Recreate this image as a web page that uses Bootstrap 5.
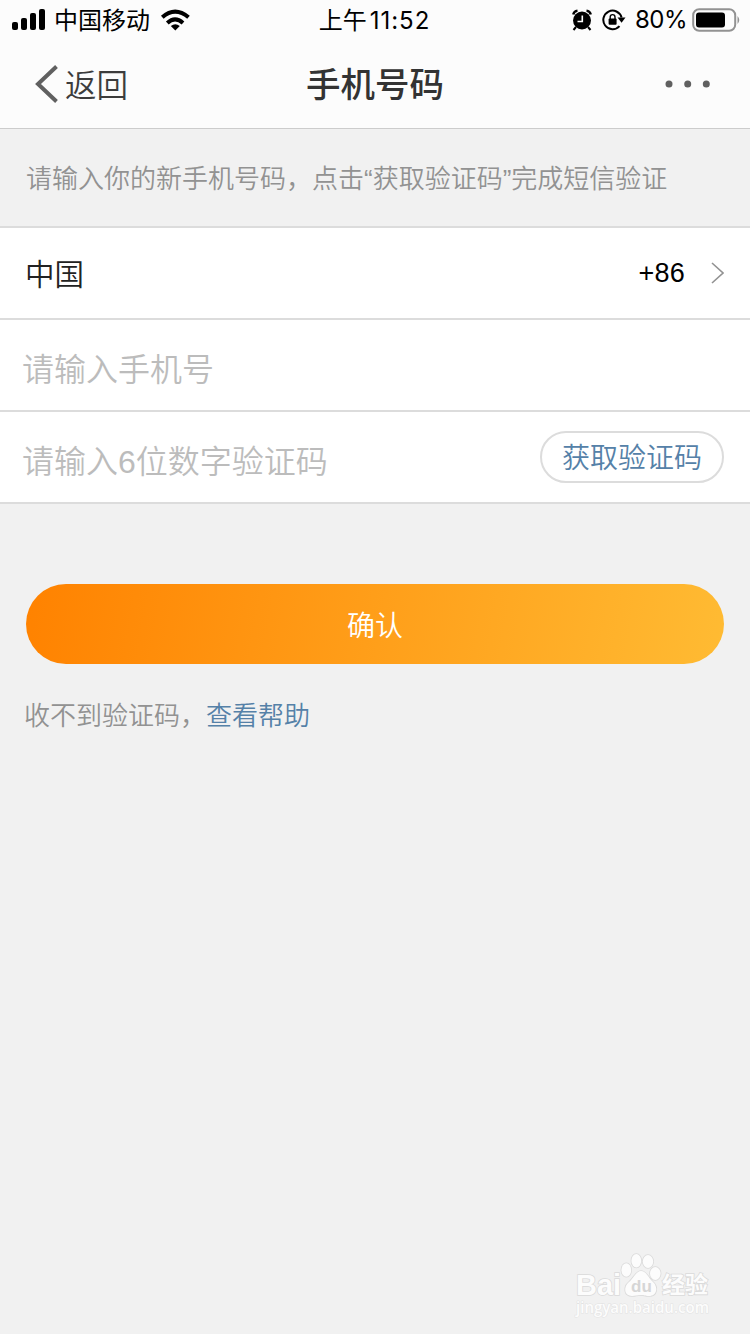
<!DOCTYPE html>
<html lang="zh-CN">
<head>
<meta charset="utf-8">
<meta name="viewport" content="width=device-width, initial-scale=1">
<title>手机号码</title>
<link href="https://cdn.jsdelivr.net/npm/bootstrap@5.3.0/dist/css/bootstrap.min.css" rel="stylesheet">
<style>
  body { background: #f1f1f1; color: #333; font-family: "Liberation Sans", "Noto Sans CJK SC", sans-serif; font-weight: 350; }
  svg { display: block; flex: none; }
  .screen { min-height: 1334px; }
  .top-area { background: #fcfcfc; height: 129px; border-bottom: 1px solid #ccc; }
  .status-bar { height: 40px; padding: 0 10px 0 12px; color: #000; font: 400 24px/40px Inter, "Noto Sans CJK SC", sans-serif; }
  .carrier { padding-top: 1px; }
  .clock { padding: 1px 3px 0 0; }
  .clock b { font-weight: 400; letter-spacing: 1px; margin-left: 3px; }
  .rotate-lock { margin-left: 10px; }
  .battery-pct { font-size: 24px; letter-spacing: -.5px; margin-left: 9px; }
  .battery { margin-left: 5px; }
  .title-bar { height: 88px; padding: 0 39px 0 35px; }
  .back-link { color: #3c3c3c; font-size: 31.5px; line-height: 46px; font-weight: 350; gap: 7px; }
  .back-link span { padding-top: 5px; }
  .page-title { font-size: 34.5px; line-height: 48px; font-weight: 500; color: #333; padding: 1px 0 0 4px; }
  .side { flex: 1 1 0; }
  .hint { height: 97px; padding: 3px 26px 0; font-size: 26px; color: #929292; white-space: nowrap; }
  .rows { border-top: 2px solid #dcdcdc; }
  .rows .list-group-item, .rows .list-group-item:last-child { height: 92px; padding: 0 26px; border: 0; border-bottom: 2px solid #dcdcdc; background: #fff; color: #222; }
  .country { font-size: 29.5px; padding-top: 4px; margin-left: -1px; }
  .dial { font-size: 27px; color: #000; font-weight: 400; letter-spacing: .2px; }
  .chev { margin-left: 26px; }
  .rows .form-control { padding: 11px 0 0; border: 0; height: 60px; font-size: 32px; font-weight: 350; margin-left: -4px; background: none; }
  .rows .form-control::placeholder { color: #bcbcbc; opacity: 1; }
  .code-btn { width: 184px; height: 52px; border: 2px solid #dcdcdc; color: #5581a8; font-size: 28px; line-height: 48px; font-weight: 350; padding: 2px 0 0; margin-bottom: 1px; }
  .confirm { height: 80px; margin: 80px 26px 0; border: 0; color: #fff; font-size: 28px; font-weight: 350; padding: 11px 0 6px; background: linear-gradient(100deg, #ff8200, #ffbb33); }
  .help { padding: 33px 24px 0; font-size: 26px; line-height: 38px; color: #929292; }
  .help a { color: #5581a8; }
  .watermark { padding: 0 38px 15px 0; }
</style>
</head>
<body>
<div class="screen d-flex flex-column">
  <header class="top-area">
    <div class="status-bar d-flex align-items-center">
      <div class="side d-flex align-items-center">
        <svg width="34" height="22" viewBox="0 0 34 22"><rect x="0" y="13" width="6" height="8" rx="2"/><rect x="9" y="9" width="6" height="12" rx="2"/><rect x="18" y="4" width="6" height="17" rx="2"/><rect x="27" y="0" width="6" height="21" rx="2"/></svg>
        <span class="carrier ms-2">中国移动</span>
        <svg class="ms-2" width="34" height="24" viewBox="0 0 34 24" fill="none" stroke="#000" stroke-width="4"><path d="M4.300 9.200Q17-2 30.500 9.200"/><path d="M9.300 15Q17 7.800 25 15"/><path d="M12.800 18Q17.300 14.500 21.800 18L17.300 22.500Z" fill="#000" stroke="none"/></svg>
      </div>
      <span class="clock">上午<b>11:52</b></span>
      <div class="side d-flex align-items-center justify-content-end">
        <svg width="20" height="22" viewBox="0 0 20 22"><circle cx="10" cy="11.500" r="9"/><path d="M1.200 5.500Q2 2 5.500 1.600M18.800 5.500Q18 2 14.500 1.600" fill="none" stroke="#000" stroke-width="2.400"/><path d="M4 18L1.500 21M16 18L18.500 21" stroke="#000" stroke-width="2"/><path d="M10.300 6.500V12.500H5.500" fill="none" stroke="#fff" stroke-width="1.600"/></svg>
        <svg class="rotate-lock" width="24" height="22" viewBox="0 0 24 22"><path d="M17.500 17.200A9.300 9.300 0 1 1 19.600 8.500" fill="none" stroke="#000" stroke-width="2"/><path d="M15.500 8.500H23.500L19.600 13.800Z"/><rect x="6.600" y="9.500" width="8" height="6.200" rx="1"/><path d="M8.200 10V8A2.400 2.400 0 0 1 13 8V10" fill="none" stroke="#000" stroke-width="1.400"/></svg>
        <span class="battery-pct">80%</span>
        <svg class="battery" width="48" height="24" viewBox="0 0 48 24"><rect x="1.200" y="1.200" width="42" height="21.500" rx="6" fill="none" stroke="#929292" stroke-width="2"/><rect x="4" y="4.500" width="29" height="15" rx="3"/><path d="M45.500 8Q49 12 45.500 16Z" fill="#929292"/></svg>
      </div>
    </div>
    <nav class="title-bar d-flex align-items-center">
      <div class="side">
        <a href="#" class="back-link d-inline-flex align-items-center text-decoration-none">
          <svg width="23" height="38" viewBox="0 0 23 38" fill="none" stroke="#606060" stroke-width="4"><path d="M21.500 1.500L3 19L21.500 36.500"/></svg>
          <span>返回</span>
        </a>
      </div>
      <h1 class="page-title m-0">手机号码</h1>
      <div class="side d-flex justify-content-end">
        <svg width="46" height="8" viewBox="0 0 46 8" fill="#606060"><circle cx="4" cy="4" r="3.500"/><circle cx="22.700" cy="4" r="3.500"/><circle cx="41.300" cy="4" r="3.500"/></svg>
      </div>
    </nav>
  </header>
  <main class="flex-grow-1">
    <div class="hint d-flex align-items-center"><span>请输入你的新手机号码，点击“获取验证码”完成短信验证</span></div>
    <div class="rows list-group list-group-flush">
      <div class="list-group-item d-flex align-items-center">
        <span class="country me-auto">中国</span>
        <span class="dial">+86</span>
        <svg class="chev" width="13" height="22" viewBox="0 0 13 22" fill="none" stroke="#929292" stroke-width="1.600"><path d="M1 1L12 11L1 21"/></svg>
      </div>
      <div class="list-group-item d-flex align-items-center">
        <input class="form-control shadow-none" type="tel" placeholder="请输入手机号">
      </div>
      <div class="list-group-item d-flex align-items-center">
        <input class="form-control shadow-none" type="text" placeholder="请输入6位数字验证码">
        <button type="button" class="code-btn btn rounded-pill flex-shrink-0">获取验证码</button>
      </div>
    </div>
    <div class="d-grid"><button type="button" class="confirm btn rounded-pill">确认</button></div>
    <div class="help">收不到验证码，<a href="#" class="text-decoration-none">查看帮助</a></div>
  </main>
  <footer class="watermark d-flex justify-content-end">
    <svg width="138" height="66" viewBox="0 0 138 66" fill="#fcfcfc" stroke="#dadada" stroke-width="1.600" paint-order="stroke" font-family="Liberation Sans, Noto Sans CJK SC, sans-serif">
      <ellipse cx="52.300" cy="17" rx="4.900" ry="6.700"/><ellipse cx="62.300" cy="7.700" rx="4.900" ry="6.700"/><ellipse cx="74" cy="8.500" rx="5.200" ry="6.500"/><ellipse cx="81.300" cy="20.500" rx="5.300" ry="6.500"/>
      <path d="M67 18C72 18 74 24 78 28C85 34 83 43 75 43C71 43 70 42 67 42C63 42 62 43 58 43C50 43 49 34 55 29C60 25 62 18 67 18Z"/>
      <text x="2" y="42" font-size="30" font-weight="700" textLength="45" lengthAdjust="spacingAndGlyphs">Bai</text>
      <text x="57" y="39" font-size="17" font-weight="700" fill="#d6d6d6" stroke="none">du</text>
      <text x="88" y="40" font-size="23" font-weight="700">经验</text>
      <text x="2" y="60" font-size="15.500" textLength="133" lengthAdjust="spacingAndGlyphs" font-family="Open Sans" font-weight="600" stroke="#e2e2e2" stroke-width="1">jingyan.baidu.com</text>
    </svg>
  </footer>
</div>
<script src="https://cdn.jsdelivr.net/npm/bootstrap@5.3.0/dist/js/bootstrap.bundle.min.js"></script>
</body>
</html>
